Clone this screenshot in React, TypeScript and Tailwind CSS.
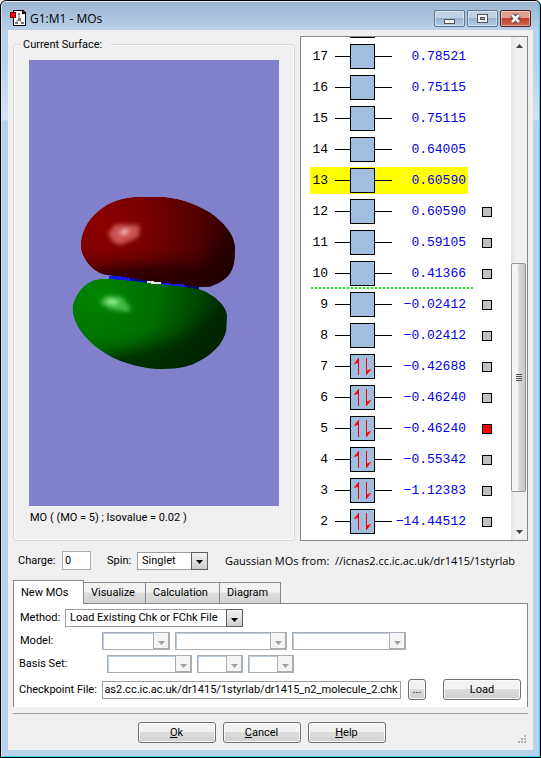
import { useEffect, useRef, useState } from 'react';
import type { ReactNode } from 'react';
import clsx from 'clsx';

interface Orbital {
  index: number;
  energy: string;
  occupied?: boolean;
  hasSurface?: boolean;
}

const ORBITALS: Orbital[] = [
  { index: 17, energy: '0.78521' },
  { index: 16, energy: '0.75115' },
  { index: 15, energy: '0.75115' },
  { index: 14, energy: '0.64005' },
  { index: 13, energy: '0.60590' },
  { index: 12, energy: '0.60590', hasSurface: true },
  { index: 11, energy: '0.59105', hasSurface: true },
  { index: 10, energy: '0.41366', hasSurface: true },
  { index: 9, energy: '−0.02412', hasSurface: true },
  { index: 8, energy: '−0.02412', hasSurface: true },
  { index: 7, energy: '−0.42688', occupied: true, hasSurface: true },
  { index: 6, energy: '−0.46240', occupied: true, hasSurface: true },
  { index: 5, energy: '−0.46240', occupied: true, hasSurface: true },
  { index: 4, energy: '−0.55342', occupied: true, hasSurface: true },
  { index: 3, energy: '−1.12383', occupied: true, hasSurface: true },
  { index: 2, energy: '−14.44512', occupied: true, hasSurface: true },
];

const TABS = ['New MOs', 'Visualize', 'Calculation', 'Diagram'];
const HIGHLIGHTED = 13;
const CHK_PATH = '//icnas2.cc.ic.ac.uk/dr1415/1styrlab/dr1415_n2_molecule_2.chk';

function TitleIcon() {
  return (
    <svg width="16" height="16" viewBox="0 0 16 16" shapeRendering="crispEdges" aria-hidden="true">
      <path d="M3.5 .5h9l3 3v12h-12z" fill="#fff" stroke="#000" />
      <path d="M12 0h1l3 3v1h-4z" fill="#000" />
      <path d="M13 1h1v1h-1z" fill="#f00" />
      <path d="M9 4v5M9 9l-3 4M9 9l3 4" stroke="#777" fill="none" shapeRendering="auto" />
      <path d="M8 3h2v2h-2zM8 8h3v3h-3zM5 12h3v2h-3zM11 12h3v2h-3z" fill="#777" />
      <path d="M.5 2.5h5v5h-5z" fill="#f00" stroke="#700" />
    </svg>
  );
}

function CaptionButton({ label, danger, children }: { label: string; danger?: boolean; children: ReactNode }) {
  return (
    <button
      aria-label={label}
      className={clsx(
        'flex h-[17px] w-[31px] items-center justify-center rounded-[2px] border shadow-[inset_0_0_0_1px_rgba(255,255,255,0.45)]',
        danger
          ? 'border-[#4b2028] bg-linear-to-b from-[#dfa092] from-45% via-[#c2412c] via-50% to-[#cc6450]'
          : 'border-[#5f7690] bg-linear-to-b from-[#bdd0e4] from-45% via-[#98b3d0] via-50% to-[#b4cde6]',
      )}
    >
      {children}
    </button>
  );
}

function TitleBar() {
  return (
    <header className="flex h-[28px] items-start pt-2 pr-[2px] pl-[2px]">
      <TitleIcon />
      <h1 className="ml-1 flex-1 text-[12px] leading-[18px] text-black">G1:M1 - MOs</h1>
      <div className="flex gap-[2px]">
        <CaptionButton label="Minimize">
          <svg width="13" height="13" viewBox="0 0 13 13" shapeRendering="crispEdges">
            <path d="M1.5 7.500h10v4h-10z" fill="#f4f4f4" stroke="#50555f" />
          </svg>
        </CaptionButton>
        <CaptionButton label="Maximize">
          <svg width="13" height="13" viewBox="0 0 13 13" shapeRendering="crispEdges">
            <path d="M1.5 2.500h10v8h-10z" fill="#f4f4f4" stroke="#50555f" />
            <path d="M4.500 5.500h4v2h-4z" fill="#a9bfd8" stroke="#50555f" />
          </svg>
        </CaptionButton>
        <CaptionButton label="Close" danger>
          <svg width="13" height="13" viewBox="0 0 13 13">
            <path d="M3 3l7 7M10 3l-7 7" stroke="#5a4048" strokeWidth="4.800" />
            <path d="M3 3l7 7M10 3l-7 7" stroke="#f4f4f4" strokeWidth="2.800" />
          </svg>
        </CaptionButton>
      </div>
    </header>
  );
}

function SurfaceView() {
  const red =
    'M252 51H345C400 57 450 75 495 108C530 138 552 165 555 200L554 235C550 280 530 303 480 320L445 322C380 315 330 308 290 304C240 295 190 288 160 283C125 272 95 235 92 200C92 150 120 105 170 75C195 62 220 54 252 51Z';
  const green =
    'M150 297C220 295 260 304 300 309C350 312 400 318 445 326C490 340 528 375 531 405L529 450C520 495 480 530 430 552C400 563 380 567 320 567C260 562 200 545 150 510C100 475 68 430 67 385C75 340 105 302 150 297Z';
  return (
    <svg viewBox="-63 -360 750 1338" className="block w-full bg-[#8080cc]" role="img" aria-label="Orbital surface">
      <defs>
        <radialGradient id="redBody" gradientUnits="userSpaceOnUse" cx="150" cy="130" r="430">
          <stop offset="0" stopColor="#8c0000" />
          <stop offset="0.35" stopColor="#780000" />
          <stop offset="0.7" stopColor="#500000" />
          <stop offset="1" stopColor="#220000" />
        </radialGradient>
        <radialGradient id="greenBody" gradientUnits="userSpaceOnUse" cx="140" cy="340" r="420">
          <stop offset="0" stopColor="#008600" />
          <stop offset="0.45" stopColor="#006c00" />
          <stop offset="0.75" stopColor="#004400" />
          <stop offset="1" stopColor="#002400" />
        </radialGradient>
        <clipPath id="redClip">
          <path d={red} shapeRendering="crispEdges" />
        </clipPath>
        <clipPath id="greenClip">
          <path d={green} shapeRendering="crispEdges" />
        </clipPath>
        <filter id="shade" x="-50%" y="-50%" width="200%" height="200%">
          <feGaussianBlur stdDeviation="22" />
        </filter>
        <filter id="glint" x="-50%" y="-50%" width="200%" height="200%">
          <feGaussianBlur stdDeviation="6" />
        </filter>
      </defs>
      <path d="M178 288h27L290 302L330 308L400 312L447 319V329L380 322L290 309L178 298Z" fill="#1414e6" shapeRendering="crispEdges" />
      <path d="M235 293L290 302V308L235 303ZM400 313L447 319V328L400 322Z" fill="#0a0a70" shapeRendering="crispEdges" />
      <g clipPath="url(#redClip)">
        <path d={red} fill="url(#redBody)" />
        <path d="M110 270C220 245 360 250 470 255C500 210 540 170 560 130L600 340H120Z" fill="#200000" filter="url(#shade)" opacity="0.85" />
        <path d="M174 160L196 132L270 135L266 172L215 194L190 188Z" fill="#d86060" filter="url(#glint)" opacity="0.85" />
        <path d="M205 158L225 147L242 152L222 166Z" fill="#ffc4c4" filter="url(#glint)" />
      </g>
      <g clipPath="url(#greenClip)">
        <path d={green} fill="url(#greenBody)" />
        <path d="M110 540C200 510 330 500 390 470C430 440 490 400 545 350V600H120Z" fill="#002200" filter="url(#shade)" opacity="0.8" />
        <path d="M148 366L170 347L217 350L243 387L234 397L178 388Z" fill="#4cc04c" filter="url(#glint)" opacity="0.9" />
        <path d="M165 367L180 358L206 364L196 374Z" fill="#a8ffa8" filter="url(#glint)" />
      </g>
      <path d="M178 288h27L290 302V307L178 297Z" fill="#1a1af0" shapeRendering="crispEdges" />
      <path d="M240 294L290 302V307L240 301Z" fill="#0a0a80" shapeRendering="crispEdges" />
      <path d="M334 309L400 313L447 320V328L400 320L334 313Z" fill="#1a1af0" shapeRendering="crispEdges" />
      <path d="M405 314L447 320V328L405 321Z" fill="#0a0a60" shapeRendering="crispEdges" />
      <path d="M290 302L333 307V312H310L290 308Z" fill="#e8e8e0" shapeRendering="crispEdges" />
    </svg>
  );
}

function OrbitalBox({ occupied }: { occupied?: boolean }) {
  return (
    <div className="flex items-center">
      <span className="h-px w-[15px] bg-black" />
      <span className="size-[25px] border border-black bg-[#a0bede]">
        {occupied && (
          <svg width="23" height="23" viewBox="0 0 23 23" fill="none" stroke="#f00" aria-hidden="true">
            <path d="M7.500 3v17M15.500 3v17" shapeRendering="crispEdges" />
            <path d="M7.500 3.500L3.500 8.500L7 7.500zM15.500 19.500l4-5l-3.500 1.500z" fill="#f00" strokeWidth="0.8" />
          </svg>
        )}
      </span>
      <span className="h-px w-[17px] bg-black" />
    </div>
  );
}

function OrbitalRow({ orbital, checked, onToggle }: { orbital: Orbital; checked: boolean; onToggle: () => void }) {
  const { index, energy, occupied, hasSurface } = orbital;
  return (
    <li className="relative flex h-[31px] shrink-0 items-start gap-[14px] pt-[2px] pl-[9px]">
      <div
        className={clsx(
          'flex h-[27px] w-[158px] items-center pr-[2px]',
          index === HIGHLIGHTED && 'bg-[#ffff00]',
        )}
      >
        <span className="w-[18px] text-right">{index}</span>
        <span className="w-[7px]" />
        <OrbitalBox occupied={occupied} />
        <span className="flex-1 text-right whitespace-nowrap text-[#0000e6]">{energy}</span>
      </div>
      {hasSurface && (
        <input
          type="checkbox"
          aria-label={`Orbital ${index}`}
          checked={checked}
          onChange={onToggle}
          className="mt-[9px] size-[10px] appearance-none border border-black bg-[#c0c0c0] checked:bg-[#ff0000]"
        />
      )}
      {index === 10 && (
        <span className="absolute bottom-0 left-[10px] h-[2px] w-[162px] bg-[repeating-linear-gradient(90deg,#00ff00_0_2px,transparent_2px_4px)]" />
      )}
    </li>
  );
}

function ScrollBar() {
  return (
    <div className="flex w-4 shrink-0 flex-col bg-linear-to-r from-[#e3e3e3] to-[#f0f0f0] to-30%">
      <span className="flex h-[17px] items-center justify-center">
        <svg width="7" height="4" viewBox="0 0 7 4">
          <path d="M3.500 0L7 4H0z" fill="#444" />
        </svg>
      </span>
      <span className="flex-1" />
      <span className="mr-px flex h-[229px] flex-col items-center justify-center gap-px rounded-[2px] border border-[#979797] bg-linear-to-r from-[#f5f5f5] from-45% via-[#dcdcdc] via-50% to-[#c6c6c6]">
        <span className="h-px w-[6px] bg-[#555]" />
        <span className="h-px w-[6px] bg-[#555]" />
        <span className="h-px w-[6px] bg-[#555]" />
        <span className="h-px w-[6px] bg-[#555]" />
      </span>
      <span className="h-[31px]" />
      <span className="flex h-[17px] items-center justify-center">
        <svg width="7" height="4" viewBox="0 0 7 4">
          <path d="M0 0h7L3.500 4z" fill="#444" />
        </svg>
      </span>
    </div>
  );
}

interface ComboProps {
  id?: string;
  label?: string;
  value?: string;
  disabled?: boolean;
  className: string;
}

function Combo({ id, label, value = '', disabled, className }: ComboProps) {
  return (
    <div className={clsx('relative h-[18px]', className)}>
      <select
        id={id}
        aria-label={label}
        disabled={disabled}
        className={clsx(
          'block size-full appearance-none border bg-white pr-4 pl-1 leading-[14px] text-black outline-none',
          disabled ? 'border-[#abadb3] shadow-[inset_1px_1px_0_#b5cfe7]' : 'border-[#9c9ea4]',
        )}
      >
        <option>{value}</option>
      </select>
      <span
        className={clsx(
          'pointer-events-none absolute inset-y-0 right-0 flex w-[17px] items-center justify-center border pt-[3px]',
          disabled
            ? 'border-[#abadb3] bg-[#f4f4f4] shadow-[inset_-1px_-1px_0_#abadb3]'
            : 'border-[#5f5f5f] bg-linear-to-b from-[#f2f2f2] to-[#cfcfcf]',
        )}
      >
        <svg width="7" height="4" viewBox="0 0 7 4">
          <path d="M0 0h7L3.500 4z" fill={disabled ? '#a0a0a0' : '#000'} />
        </svg>
      </span>
    </div>
  );
}

function PushButton({ className, children, ...rest }: { className: string; children: ReactNode; 'aria-label'?: string }) {
  return (
    <button
      {...rest}
      className={clsx(
        'h-[21px] rounded-[3px] border border-[#707070] bg-linear-to-b from-[#f2f2f2] from-45% via-[#dddddd] via-50% to-[#cfcfcf] leading-[18px] shadow-[inset_0_0_0_1px_#fafafa]',
        className,
      )}
    >
      {children}
    </button>
  );
}

function NewMosPanel() {
  const pathRef = useRef<HTMLInputElement>(null);

  // keep the file name end of the path in view
  useEffect(() => {
    const el = pathRef.current;
    if (el) el.scrollLeft = el.scrollWidth;
  }, []);

  return (
    <div role="tabpanel" className="-mt-px border border-b-0 border-[#85888f] bg-white px-[5px] pt-[5px] pb-[7px]">
      <div className="flex h-[18px] items-center">
        <label htmlFor="method" className="w-[46px] pl-px">Method:</label>
        <Combo id="method" value="Load Existing Chk or FChk File" className="w-[178px]" />
      </div>
      <div className="mt-[5px] flex h-[18px] items-center gap-[5px]">
        <label htmlFor="model" className="w-[78px] pl-px">Model:</label>
        <Combo id="model" disabled className="w-[68px]" />
        <Combo label="Model method" disabled className="w-[112px]" />
        <Combo label="Model functional" disabled className="w-[114px]" />
      </div>
      <div className="mt-[5px] flex h-[18px] items-center gap-[5px]">
        <label htmlFor="basis" className="w-[83px]">Basis Set:</label>
        <Combo id="basis" disabled className="w-[85px]" />
        <Combo label="Diffuse functions" disabled className="w-[46px]" />
        <Combo label="Polarization functions" disabled className="w-[46px]" />
      </div>
      <div className="mt-[6px] flex items-center">
        <label htmlFor="chk" className="w-[83px] whitespace-nowrap">Checkpoint File:</label>
        <input
          id="chk"
          ref={pathRef}
          defaultValue={CHK_PATH}
          className="h-[18px] min-w-0 flex-1 border border-[#9c9ea4] bg-white px-[2px] outline-none"
        />
        <PushButton className="ml-[7px] w-[18px]" aria-label="Browse">...</PushButton>
        <PushButton className="mr-px ml-[17px] w-[78px]">Load</PushButton>
      </div>
    </div>
  );
}

export default function App() {
  const [surface, setSurface] = useState(5);
  const [tab, setTab] = useState('New MOs');

  return (
    <div className="flex min-h-screen flex-col rounded-t-[6px] border border-black bg-black font-['Roboto','Liberation_Sans',sans-serif] text-[11px] leading-4 text-black">
      <div className="flex flex-1 flex-col rounded-t-[5px] border border-t-[#e4eef8] border-r-[#3ad3ee] border-b-[#3ad3ee] border-l-[#d6e6f5] bg-[linear-gradient(#9ab5d3_0px,#b9d1ea_28px,#b9d1ea_60px,#d3e3f4_118px,#b9d1ea_119px)] px-[6px] pb-[6px]">
        <div className="font-['Open_Sans','Noto_Sans',sans-serif]">
          <TitleBar />
        </div>

        <main className="flex flex-1 flex-col bg-[#f0f0f0] px-[5px] pt-[6px] pb-[7px]">
          <div className="flex gap-[5px]">
            <fieldset className="min-w-0 flex-1 rounded-[3px] border border-[#d0dbe3] px-[7px] shadow-[inset_0_0_0_1px_#fbfbfb]">
              <legend className="h-4 bg-[#f0f0f0] pr-2 pl-[2px] leading-[18px]">Current Surface:</legend>
              <div className="px-2 pt-2">
                <SurfaceView />
                <p className="mt-1 pl-px leading-4">MO ( (MO = 5) ; Isovalue = 0.02 )</p>
              </div>
            </fieldset>

            <div className="flex h-[505px] w-[228px] border border-[#828790] bg-white">
              <ul className="flex flex-1 flex-col justify-end overflow-hidden pb-[3px] font-['Liberation_Mono',monospace] text-[13px] leading-4">
                <li className="mb-[3px] ml-[49px] h-px w-[25px] shrink-0 bg-black" />
                {ORBITALS.map((o) => (
                  <OrbitalRow
                    key={o.index}
                    orbital={o}
                    checked={o.index === surface}
                    onToggle={() => setSurface(o.index)}
                  />
                ))}
              </ul>
              <ScrollBar />
            </div>
          </div>

          <div className="mt-[10px] flex h-[19px] items-center pr-[5px] pl-[5px]">
            <label htmlFor="charge" className="w-11">Charge:</label>
            <input id="charge" defaultValue="0" className="h-[19px] w-[29px] border border-[#abadb3] bg-white px-[2px] outline-none" />
            <label htmlFor="spin" className="ml-4 w-[30px]">Spin:</label>
            <Combo id="spin" value="Singlet" className="w-[71px]" />
            <p className="ml-[17px] flex-1 font-['Open_Sans','Noto_Sans',sans-serif] whitespace-pre">
              Gaussian MOs from:  //icnas2.cc.ic.ac.uk/dr1415/1styrlab
            </p>
          </div>

          <div role="tablist" className="relative mt-[10px] flex h-6 items-end">
            {TABS.map((name) => (
              <button
                key={name}
                role="tab"
                aria-selected={name === tab}
                onClick={() => setTab(name)}
                className={clsx(
                  'border-[#85888f] pl-[7px] text-left leading-[18px] whitespace-nowrap',
                  name === tab
                    ? 'h-6 border-x border-t bg-white'
                    : 'h-[22px] border-t border-r border-b bg-linear-to-b from-[#f2f2f2] from-45% via-[#dddddd] via-50% to-[#d3d3d3]',
                  name === 'New MOs' && 'w-[71px]',
                  name === 'Visualize' && 'w-[62px]',
                  name === 'Calculation' && 'w-[74px]',
                  name === 'Diagram' && 'w-[61px]',
                )}
              >
                {name}
              </button>
            ))}
          </div>
          <NewMosPanel />

          <div className="mt-[6px] h-px bg-[#a0a0a0]" />
          <footer className="relative mt-2 flex justify-center gap-[7px] pr-[18px]">
            <PushButton className="w-[78px]"><u>O</u>k</PushButton>
            <PushButton className="w-[78px]"><u>C</u>ancel</PushButton>
            <PushButton className="w-[78px]"><u>H</u>elp</PushButton>
            <svg width="8" height="8" viewBox="0 0 8 8" fill="#b4b4b4" className="absolute right-[2px] bottom-0" aria-hidden="true">
              <path d="M6 0h2v2h-2zM3 3h2v2h-2zM6 3h2v2h-2zM0 6h2v2h-2zM3 6h2v2h-2zM6 6h2v2h-2z" />
            </svg>
          </footer>
        </main>
      </div>
    </div>
  );
}
